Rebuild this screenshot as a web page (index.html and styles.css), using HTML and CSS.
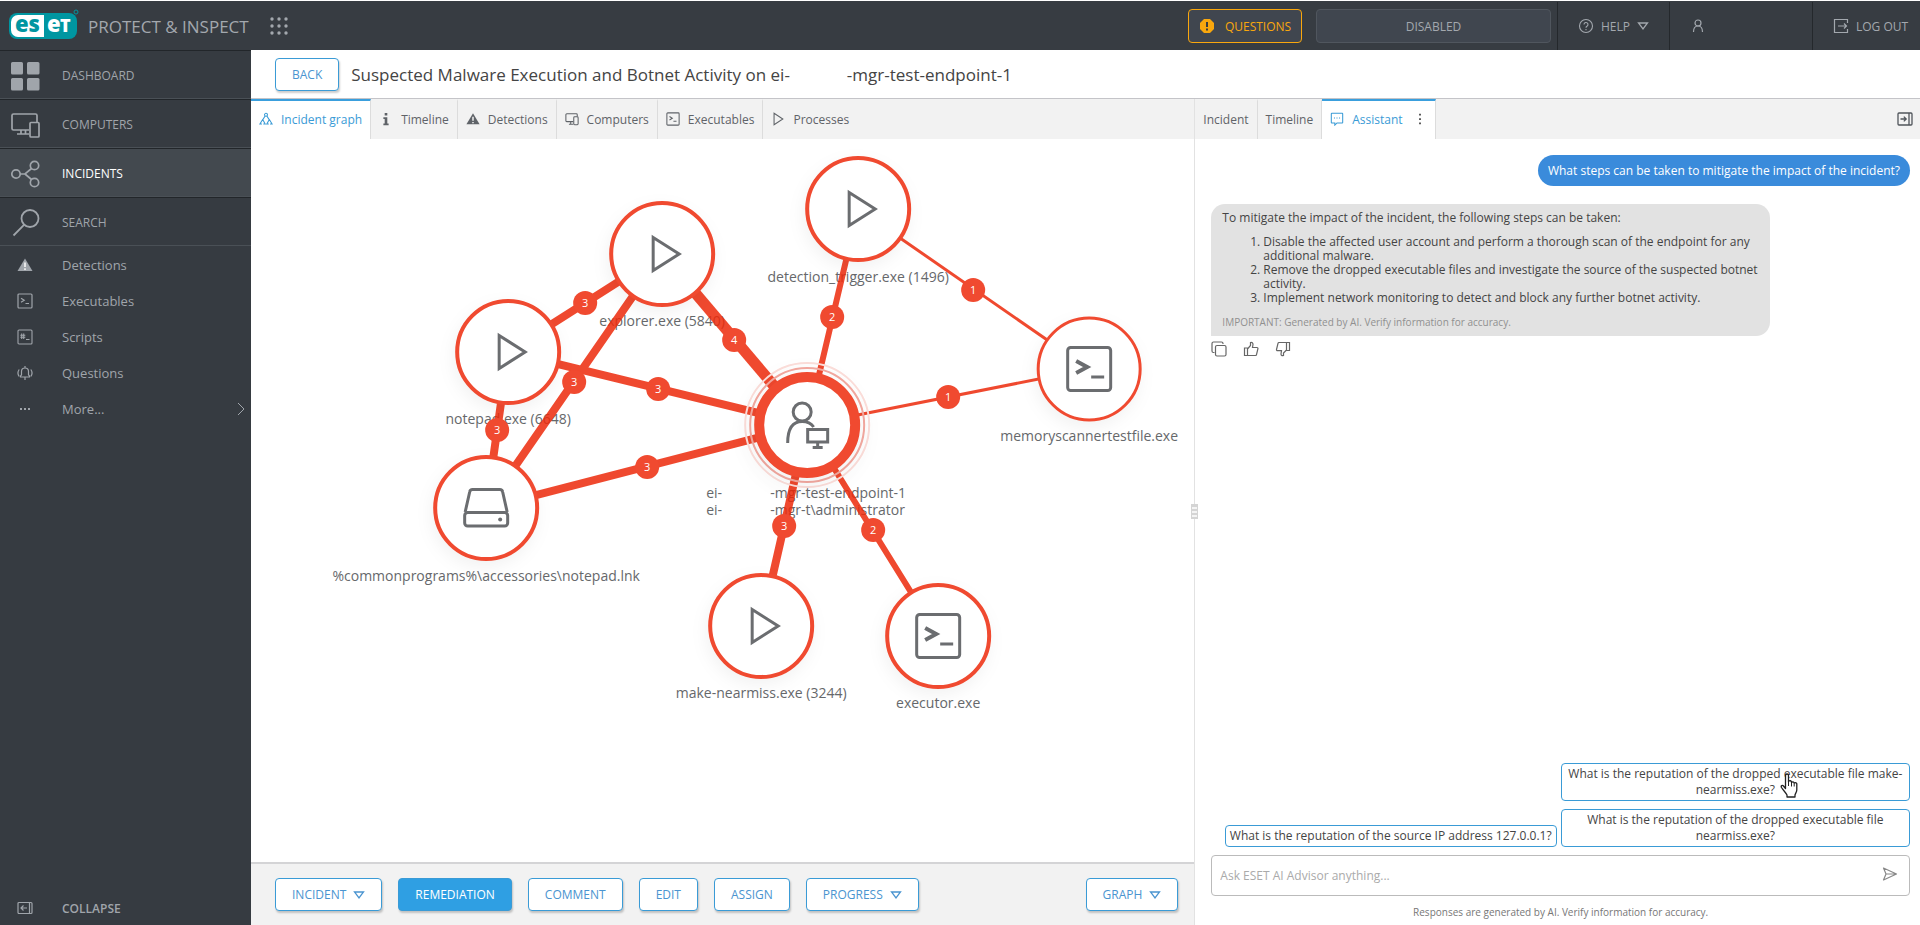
FILE: index.html
```html
<!DOCTYPE html>
<html lang="en">
<head>
  <meta charset="UTF-8" />
  <meta name="viewport" content="width=device-width, initial-scale=1.0"/>
  <title>ESET Protect &amp; Inspect</title>
  <link rel="stylesheet" href="styles.css">
</head>
<body>
  <!-- shared icons -->
  <svg class="sprite" aria-hidden="true">
    <symbol id="i-dashboard" viewBox="0 0 30 30"><path fill="currentColor" d="M2 1h9.500a1.500 1.500 0 0 1 1.500 1.500V12a1.500 1.500 0 0 1-1.500 1.500H2.500A1.500 1.500 0 0 1 1 12V2.500A1.500 1.500 0 0 1 2.500 1zM18.500 1H28a1.500 1.500 0 0 1 1.500 1.500V12a1.500 1.500 0 0 1-1.500 1.500h-9.500A1.500 1.500 0 0 1 17 12V2.500A1.500 1.500 0 0 1 18.500 1zM2.500 17h9a1.500 1.500 0 0 1 1.500 1.500v9.500a1.500 1.500 0 0 1-1.500 1.500h-9A1.500 1.500 0 0 1 1 28v-9.500A1.500 1.500 0 0 1 2.500 17zM18.500 17H28a1.500 1.500 0 0 1 1.500 1.500V28a1.500 1.500 0 0 1-1.500 1.500h-9.500A1.500 1.500 0 0 1 17 28v-9.500a1.500 1.500 0 0 1 1.500-1.500z"/></symbol>
    <symbol id="i-computers" viewBox="0 0 30 30"><g fill="none" stroke="currentColor" stroke-width="1.700"><path d="M19 20H3.500A1.500 1.500 0 0 1 2 18.500v-13A1.500 1.500 0 0 1 3.500 4h22A1.500 1.500 0 0 1 27 5.500V12"/><path d="M11 20v4M15.500 20v4M7 24h12"/><rect x="20" y="12.500" width="9" height="14.500" rx="1"/></g></symbol>
    <symbol id="i-incidents" viewBox="0 0 30 30"><g fill="none" stroke="currentColor" stroke-width="1.700"><circle cx="6" cy="15" r="4.200"/><circle cx="24.500" cy="6.500" r="4.200"/><circle cx="24.500" cy="23.500" r="4.200"/><path d="M10.200 15h4.800l6.500-5.500M15 15l6.500 5.500"/></g></symbol>
    <symbol id="i-search" viewBox="0 0 30 30"><g fill="none" stroke="currentColor" stroke-width="1.800"><circle cx="20" cy="10.500" r="8.500"/><path d="M14 16.800 3.500 27.500"/></g></symbol>
    <symbol id="i-warn" viewBox="0 0 16 16"><path fill="currentColor" d="M8 1.500 15.500 14H.500z"/><path class="cut" d="M8 5.500v4.500M8 11.300v1.600" stroke-width="1.700"/></symbol>
    <symbol id="i-exe" viewBox="0 0 16 16"><g fill="none" stroke="currentColor" stroke-width="1.200"><rect x="1" y="1" width="14" height="14" rx="1"/><path d="m4 5.200 3.200 2L4 9.200M8.500 10.500h3.500"/></g></symbol>
    <symbol id="i-script" viewBox="0 0 16 16"><g fill="none" stroke="currentColor" stroke-width="1.100"><rect x="1" y="1" width="14" height="14" rx="1"/><path d="M4.700 4.500v5.500M6.700 4.500v5.500M3.300 6.200h5M3.300 8.300h5M9 10.500h3.500"/></g></symbol>
    <symbol id="i-bell" viewBox="0 0 16 16"><g fill="none" stroke="currentColor" stroke-width="1.200"><path d="M3.500 12V11l1-1.200V6.500a3.500 3.500 0 0 1 7 0v3.300l1 1.200v1zM8 1v2M8 12.500V15M2.200 4.500a6 6 0 0 0 0 7M13.800 4.500a6 6 0 0 1 0 7"/></g></symbol>
    <symbol id="i-dots" viewBox="0 0 16 16"><path fill="currentColor" d="M3 7h2v2H3zM7 7h2v2H7zM11 7h2v2h-2z"/></symbol>
    <symbol id="i-collapse" viewBox="0 0 16 16"><g fill="none" stroke="currentColor" stroke-width="1.200"><rect x="1" y="2.500" width="14" height="11" rx="1"/><path d="M12.500 2.500v11M10 8H4M6.500 5.500 4 8l2.500 2.500"/></g></symbol>
    <symbol id="i-expand" viewBox="0 0 16 16"><g fill="none" stroke="currentColor" stroke-width="1.300"><rect x="1" y="2" width="14" height="12" rx="1"/><path d="M12 2v12M3.500 8H9M6.800 5.600 9.200 8l-2.400 2.400"/></g></symbol>
    <symbol id="i-graph" viewBox="0 0 16 16"><g fill="none" stroke="currentColor" stroke-width="1.200"><circle cx="8" cy="3.200" r="1.700"/><path d="M7 4.600 4.200 9M9 4.600 11.800 9M4.200 8.500 1 13.800h2.400M4.200 8.500l2.900 5.300H4.900M11.800 8.500l-2.900 5.300h2.300M11.800 8.500l3.200 5.300h-2.400"/></g></symbol>
    <symbol id="i-info" viewBox="0 0 16 16"><path fill="currentColor" d="M6.500 1h3v3h-3zM5 6h4.500v7H11v2H5v-2h1.500V8H5z"/></symbol>
    <symbol id="i-pc" viewBox="0 0 16 16"><g fill="none" stroke="currentColor" stroke-width="1.200"><path d="M9.500 11H2a1 1 0 0 1-1-1V3a1 1 0 0 1 1-1h11a1 1 0 0 1 1 1v2M4.500 14h5M6.500 11v3"/><rect x="10" y="5.500" width="5" height="9" rx="1"/></g></symbol>
    <symbol id="i-play" viewBox="0 0 16 16"><path fill="none" stroke="currentColor" stroke-width="1.200" d="M3.500 1.500 13.500 8l-10 6.500z"/></symbol>
    <symbol id="i-down" viewBox="0 0 12 10"><path fill="none" stroke="currentColor" stroke-width="1.300" d="M1.500 2h9L6 8z"/></symbol>
    <symbol id="i-help" viewBox="0 0 16 16"><g fill="none" stroke="currentColor" stroke-width="1.100"><circle cx="8" cy="8" r="6.500"/><path d="M6 6.500a2 2 0 1 1 3 1.700c-.700.400-1 .7-1 1.500M8 11v1.300"/></g></symbol>
    <symbol id="i-user" viewBox="0 0 16 16"><g fill="none" stroke="currentColor" stroke-width="1.200"><circle cx="8" cy="5" r="3"/><path d="M3.500 14c0-3.500 1.500-6 4.500-6s4.500 2.500 4.500 6"/></g></symbol>
    <symbol id="i-logout" viewBox="0 0 16 16"><path fill="none" stroke="currentColor" stroke-width="1.200" d="M14.500 5V1.500h-13v13h13V11M5 8h8.500M11 5.500 13.500 8 11 10.500"/></symbol>
    <symbol id="i-chat" viewBox="0 0 16 16"><path fill="none" stroke="currentColor" stroke-width="1.200" d="M2 1.500h12a.5.5 0 0 1 .5.500v10a.5.5 0 0 1-.5.500H8L5.500 15v-2.500H2a.5.5 0 0 1-.5-.5V2a.5.5 0 0 1 .5-.5z"/><path fill="currentColor" d="M4.500 6.300h1.200v1.200H4.500zM7.400 6.300h1.200v1.200H7.400zM10.300 6.300h1.200v1.200h-1.200z"/></symbol>
    <symbol id="i-kebab" viewBox="0 0 16 16"><path fill="currentColor" d="M7 2h2v2H7zM7 7h2v2H7zM7 12h2v2H7z"/></symbol>
    <symbol id="i-copy" viewBox="0 0 16 16"><g fill="none" stroke="currentColor" stroke-width="1.200"><rect x="4.500" y="4.500" width="10.500" height="10.500" rx="1.500"/><path d="M3.500 11.500H2.500A1.500 1.500 0 0 1 1 10V2.500A1.500 1.500 0 0 1 2.500 1h8A1.500 1.500 0 0 1 12 2.500v.5"/></g></symbol>
    <symbol id="i-up" viewBox="0 0 16 16"><path fill="none" stroke="currentColor" stroke-width="1.200" d="M1.500 7h3v7.500h-3zM4.500 8 7.500 4.500V1.500C9 1 10 2 10 3.500L9.500 6.500H14a1 1 0 0 1 1 1L13.500 13.500a1 1 0 0 1-1 1h-8"/></symbol>
    <symbol id="i-down-thumb" viewBox="0 0 16 16"><path fill="none" stroke="currentColor" stroke-width="1.200" d="M11.500 1.500h3v8h-3zM11.500 1.500H4a1 1 0 0 0-1 .8L1.500 8.500a1 1 0 0 0 1 1.200h4L6 13c0 1.500 1 2 2.500 1.500v-2.500l3-3"/></symbol>
    <symbol id="i-send" viewBox="0 0 16 16"><path fill="none" stroke="currentColor" stroke-width="1.200" stroke-linejoin="round" d="M1.500 2 14.500 8l-13 6 2.500-6zM4 8h10"/></symbol>
    <symbol id="n-play" viewBox="0 0 60 60"><path fill="none" stroke="currentColor" stroke-width="3" d="M21 13.500 47 30 21 46.500z"/></symbol>
    <symbol id="n-exe" viewBox="0 0 60 60"><rect x="8.500" y="8.500" width="43" height="43" rx="3" fill="none" stroke="currentColor" stroke-width="3"/><path fill="none" stroke="currentColor" stroke-width="4" d="m17 22 11 6-11 6"/><path stroke="currentColor" stroke-width="3" d="M32 38h13"/></symbol>
    <symbol id="n-drive" viewBox="0 0 60 60"><g fill="none" stroke="currentColor" stroke-width="3"><path d="m9 34 4.500-20a3 3 0 0 1 3-2.500h27a3 3 0 0 1 3 2.500L51 34"/><rect x="8.500" y="34.500" width="43" height="13.500" rx="3"/></g><circle cx="44" cy="41.500" r="2" fill="currentColor"/></symbol>
    <symbol id="n-user" viewBox="0 0 60 60"><g fill="none" stroke="currentColor" stroke-width="3"><circle cx="25" cy="17" r="9"/><path d="M10.500 48c0-15 5-21.500 14.500-21.500 5 0 9 1.800 11.500 5.500"/><rect x="30.500" y="34.500" width="20" height="12.500"/><path d="M40.500 47v5M35.500 52.500h10"/></g></symbol>
  </svg>

  <header class="topbar">
    <svg class="logo" viewBox="0 0 72 32" role="img" aria-label="eset">
      <rect x="1" y="5" width="68" height="26" rx="8" fill="#0096a1"/>
      <path d="M10 7h26v22H10a7 7 0 0 1-7-7v-8a7 7 0 0 1 7-7z" fill="#fff"/>
      <circle cx="68" cy="4" r="2" fill="none" stroke="#0096a1"/>
      <text x="7" y="24" class="logo-text"><tspan fill="#0096a1">es</tspan><tspan x="39" fill="#fff">e</tspan><tspan x="52" fill="#fff" class="logo-cap">T</tspan></text>
    </svg>
    <span class="product">PROTECT &amp; INSPECT</span>
    <button class="apps" aria-label="Apps">
      <svg viewBox="0 0 20 20" fill="currentColor"><circle cx="3" cy="3" r="1.700"/><circle cx="10" cy="3" r="1.700"/><circle cx="17" cy="3" r="1.700"/><circle cx="3" cy="10" r="1.700"/><circle cx="10" cy="10" r="1.700"/><circle cx="17" cy="10" r="1.700"/><circle cx="3" cy="17" r="1.700"/><circle cx="10" cy="17" r="1.700"/><circle cx="17" cy="17" r="1.700"/></svg>
    </button>
    <button class="questions">
      <svg class="icon" viewBox="0 0 16 16"><path fill="#f9a70d" d="M5 1h6l4 4v6l-4 4H5l-4-4V5z"/><path stroke="#373c43" stroke-width="2" d="M8 4v5M8 10.500v2"/></svg>
      QUESTIONS
    </button>
    <button class="disabled-box">DISABLED</button>
    <button class="top-item help"><svg class="icon"><use href="#i-help"/></svg>HELP<svg class="caret"><use href="#i-down"/></svg></button>
    <button class="top-item user" aria-label="User"><svg class="icon"><use href="#i-user"/></svg></button>
    <button class="top-item logout"><svg class="icon"><use href="#i-logout"/></svg>LOG OUT</button>
  </header>

  <div class="layout">
    <nav class="sidebar">
      <a class="nav-main" href="#"><svg><use href="#i-dashboard"/></svg>DASHBOARD</a>
      <a class="nav-main" href="#"><svg><use href="#i-computers"/></svg>COMPUTERS</a>
      <a class="nav-main active" href="#"><svg><use href="#i-incidents"/></svg>INCIDENTS</a>
      <a class="nav-main" href="#"><svg><use href="#i-search"/></svg>SEARCH</a>
      <a class="nav-sub" href="#"><svg><use href="#i-warn"/></svg>Detections</a>
      <a class="nav-sub" href="#"><svg><use href="#i-exe"/></svg>Executables</a>
      <a class="nav-sub" href="#"><svg><use href="#i-script"/></svg>Scripts</a>
      <a class="nav-sub" href="#"><svg><use href="#i-bell"/></svg>Questions</a>
      <a class="nav-sub" href="#"><svg><use href="#i-dots"/></svg>More...<svg class="chevron" viewBox="0 0 8 14"><path fill="none" stroke="currentColor" d="m1 1 6 6-6 6"/></svg></a>
      <a class="nav-sub collapse" href="#"><svg><use href="#i-collapse"/></svg>COLLAPSE</a>
    </nav>

    <main class="content">
      <div class="titlebar">
        <button class="btn">BACK</button>
        <h1>Suspected Malware Execution and Botnet Activity on ei-<span class="blank"></span>-mgr-test-endpoint-1</h1>
      </div>

      <div class="panels">
        <section class="graph-panel">
          <div class="tabs">
            <button class="tab active"><svg class="icon"><use href="#i-graph"/></svg>Incident graph</button>
            <button class="tab"><svg class="icon"><use href="#i-info"/></svg>Timeline</button>
            <button class="tab"><svg class="icon"><use href="#i-warn"/></svg>Detections</button>
            <button class="tab"><svg class="icon"><use href="#i-pc"/></svg>Computers</button>
            <button class="tab"><svg class="icon"><use href="#i-exe"/></svg>Executables</button>
            <button class="tab"><svg class="icon"><use href="#i-play"/></svg>Processes</button>
          </div>

          <svg class="graph" viewBox="0 0 943 723">
            <g class="labels">
              <text x="607" y="143">detection_trigger.exe (1496)</text>
              <text x="411" y="187">explorer.exe (5840)</text>
              <text x="257" y="285">notepad.exe (6648)</text>
              <text x="235" y="442">%commonprograms%\accessories\notepad.lnk</text>
              <text x="838" y="302">memoryscannertestfile.exe</text>
              <text x="510" y="559">make-nearmiss.exe (3244)</text>
              <text x="687" y="569">executor.exe</text>
              <g class="start">
                <text x="455" y="359">ei-</text>
                <text x="519" y="359">-mgr-test-endpoint-1</text>
                <text x="455" y="376">ei-</text>
                <text x="519" y="376">-mgr-t\administrator</text>
              </g>
            </g>
            <g class="edges">
              <path stroke-width="11" d="M411 115 556 286"/>
              <path stroke-width="8" d="M411 115 257 213M411 115 235 369M257 213 235 369M257 213 556 286M235 369 556 286M556 286 510 487"/>
              <path stroke-width="6" d="M607 70 556 286M556 286 687 497"/>
              <path stroke-width="3" d="M607 70 838 230M556 286 838 230"/>
            </g>
            <g class="nodes">
              <circle cx="607" cy="70" r="51"/>
              <circle cx="411" cy="115" r="51"/>
              <circle cx="257" cy="213" r="51"/>
              <circle cx="235" cy="369" r="51"/>
              <circle cx="838" cy="230" r="51" class="thin"/>
              <circle cx="510" cy="487" r="51"/>
              <circle cx="687" cy="497" r="51"/>
              <circle cx="556" cy="286" r="57" class="halo"/>
              <circle cx="556" cy="286" r="62" class="halo faint"/>
              <circle cx="556" cy="286" r="48" class="center"/>
            </g>
            <g class="node-icons">
              <use href="#n-play" x="577" y="40" width="60" height="60"/>
              <use href="#n-play" x="381" y="85" width="60" height="60"/>
              <use href="#n-play" x="227" y="183" width="60" height="60"/>
              <use href="#n-drive" x="205" y="339" width="60" height="60"/>
              <use href="#n-exe" x="808" y="200" width="60" height="60"/>
              <use href="#n-play" x="480" y="457" width="60" height="60"/>
              <use href="#n-exe" x="657" y="467" width="60" height="60"/>
              <use href="#n-user" x="526" y="256" width="60" height="60"/>
            </g>
            <g class="badges">
              <circle cx="334" cy="164" r="12"/><text x="334" y="168">3</text>
              <circle cx="323" cy="243" r="12"/><text x="323" y="247">3</text>
              <circle cx="407" cy="250" r="12"/><text x="407" y="254">3</text>
              <circle cx="483" cy="201" r="12"/><text x="483" y="205">4</text>
              <circle cx="246" cy="291" r="12"/><text x="246" y="295">3</text>
              <circle cx="396" cy="328" r="12"/><text x="396" y="332">3</text>
              <circle cx="533" cy="387" r="12"/><text x="533" y="391">3</text>
              <circle cx="622" cy="391" r="12"/><text x="622" y="395">2</text>
              <circle cx="581" cy="178" r="12"/><text x="581" y="182">2</text>
              <circle cx="722" cy="151" r="12"/><text x="722" y="155">1</text>
              <circle cx="697" cy="258" r="12"/><text x="697" y="262">1</text>
            </g>
          </svg>

          <div class="actions">
            <button class="btn">INCIDENT<svg class="caret"><use href="#i-down"/></svg></button>
            <button class="btn primary">REMEDIATION</button>
            <button class="btn">COMMENT</button>
            <button class="btn">EDIT</button>
            <button class="btn">ASSIGN</button>
            <button class="btn">PROGRESS<svg class="caret"><use href="#i-down"/></svg></button>
            <button class="btn last">GRAPH<svg class="caret"><use href="#i-down"/></svg></button>
          </div>
        </section>

        <aside class="assistant">
          <div class="splitter"></div>
          <div class="tabs">
            <button class="tab">Incident</button>
            <button class="tab">Timeline</button>
            <button class="tab active"><svg class="icon"><use href="#i-chat"/></svg>Assistant<svg class="icon kebab"><use href="#i-kebab"/></svg></button>
            <button class="hide-panel" aria-label="Hide panel"><svg class="icon"><use href="#i-expand"/></svg></button>
          </div>

          <div class="chat">
            <p class="question">What steps can be taken to mitigate the impact of the incident?</p>
            <div class="answer">
              <p>To mitigate the impact of the incident, the following steps can be taken:</p>
              <ol>
                <li>Disable the affected user account and perform a thorough scan of the endpoint for any additional malware.</li>
                <li>Remove the dropped executable files and investigate the source of the suspected botnet activity.</li>
                <li>Implement network monitoring to detect and block any further botnet activity.</li>
              </ol>
              <p class="important">IMPORTANT: Generated by AI. Verify information for accuracy.</p>
            </div>
            <div class="feedback">
              <button aria-label="Copy"><svg class="icon"><use href="#i-copy"/></svg></button>
              <button aria-label="Like"><svg class="icon"><use href="#i-up"/></svg></button>
              <button aria-label="Dislike"><svg class="icon"><use href="#i-down-thumb"/></svg></button>
            </div>

            <div class="suggestions">
              <div class="suggestion-row">
                <button class="suggestion wide">What is the reputation of the dropped executable file make-<wbr>nearmiss.exe?
                  <svg class="cursor" viewBox="0 0 18 25"><path fill="#fff" stroke="#222" stroke-width="1.300" stroke-linejoin="round" d="M5.500 15.500V2.500a1.500 1.500 0 0 1 3 0V9a1.500 1.500 0 0 1 3 .5 1.500 1.500 0 0 1 2.700.700 1.500 1.500 0 0 1 2.600 1.300V17c0 2-1.500 3.500-1.800 5v2H7v-2c-1-2-3.500-4.500-5.500-7.500-1-2 1-2.500 2-1.500z"/><path stroke="#222" d="M8.500 9v4M11.500 9.500v4M14.200 10.500v3"/></svg>
                </button>
              </div>
              <div class="suggestion-row">
                <button class="suggestion">What is the reputation of the source IP address 127.0.0.1?</button>
                <button class="suggestion wide">What is the reputation of the dropped executable file nearmiss.exe?</button>
              </div>
            </div>
            <div class="ask">
              <input type="text" aria-label="Message" placeholder="Ask ESET AI Advisor anything..." />
              <button aria-label="Send"><svg class="icon"><use href="#i-send"/></svg></button>
            </div>
            <p class="note">Responses are generated by AI. Verify information for accuracy.</p>
          </div>
        </aside>
      </div>
    </main>
  </div>
</body>
</html>
```
FILE: styles.css
```css
* {
  box-sizing: border-box;
}

body {
  margin: 0;
  height: 100vh;
  display: flex;
  flex-direction: column;
  font-family: "Open Sans", "Noto Sans", sans-serif;
  font-size: 12px;
  color: #444;
  background: #fff;
}

button {
  font: inherit;
  color: inherit;
  background: none;
  border: none;
  padding: 0;
  cursor: pointer;
}

h1, p, ol {
  margin: 0;
}

.sprite {
  position: absolute;
  width: 0;
  height: 0;
}

.icon {
  width: 16px;
  height: 16px;
  flex: none;
}

.caret {
  width: 12px;
  height: 10px;
  flex: none;
}

.cut {
  stroke: #f2f2f2;
}

/* top bar */
.topbar {
  display: flex;
  align-items: center;
  height: 50px;
  flex: none;
  padding-left: 8px;
  padding-top: 1px;
  background: #373c42;
  border-top: 1px solid #fff;
  color: #a3a8ae;
}

.logo {
  width: 72px;
  height: 32px;
  margin-bottom: 4px;
}

.logo-text {
  font-size: 22px;
  font-weight: 800;
}

.logo-cap {
  font-size: 18px;
}

.product {
  margin-left: 8px;
  font-size: 17px;
}

.apps {
  width: 20px;
  height: 20px;
  margin-left: 20px;
}

.questions {
  display: flex;
  align-items: center;
  justify-content: center;
  gap: 10px;
  width: 114px;
  height: 34px;
  margin-left: auto;
  border: 1px solid #f9a70d;
  border-radius: 4px;
  background: #40464f;
  color: #f9a70d;
}

.disabled-box {
  width: 235px;
  height: 34px;
  margin: 0 6px 0 14px;
  border: 1px solid #50565e;
  border-radius: 4px;
  background: #40464f;
}

.top-item {
  display: flex;
  align-items: center;
  align-self: stretch;
  gap: 7px;
  padding: 0 20px;
  border-left: 1px solid #24282c;
  white-space: nowrap;
}

.help {
  width: 112px;
}

.user {
  width: 143px;
}

.logout {
  width: 108px;
}

/* sidebar */
.layout {
  display: flex;
  flex: 1;
  min-height: 0;
}

.sidebar {
  display: flex;
  flex-direction: column;
  width: 251px;
  flex: none;
  background: #363b41;
}

.sidebar .cut {
  stroke: #363b41;
}

.sidebar a {
  display: flex;
  align-items: center;
  color: #a0a5ab;
  text-decoration: none;
}

.nav-main {
  height: 49px;
  padding: 2px 0 0 10px;
  gap: 22px;
  border-top: 1px solid #22262a;
  border-bottom: 1px solid #4a5056;
}

.nav-main svg {
  width: 30px;
  height: 30px;
}

.sidebar .nav-main.active {
  background: #43494f;
  color: #fff;
}

.nav-main.active svg {
  color: #a0a5ab;
}

.nav-sub {
  height: 36px;
  padding: 2px 6px 0 17px;
  gap: 29px;
  font-size: 13px;
}

.nav-sub svg {
  width: 16px;
  height: 16px;
}

.nav-sub .chevron {
  width: 8px;
  height: 14px;
  margin-left: auto;
}

.collapse {
  margin-top: auto;
  font-size: 12px;
  font-weight: 600;
}

/* title */
.content {
  display: flex;
  flex-direction: column;
  flex: 1;
  min-width: 0;
}

.titlebar {
  display: flex;
  align-items: center;
  gap: 12px;
  height: 49px;
  flex: none;
  padding-left: 24px;
  border-bottom: 1px solid #c4c4c8;
}

.titlebar h1 {
  font-size: 17px;
  font-weight: 400;
  white-space: nowrap;
}

.blank {
  display: inline-block;
  width: 57px;
}

.btn {
  display: flex;
  align-items: center;
  justify-content: center;
  gap: 7px;
  height: 33px;
  padding: 0 16px;
  border: 1px solid #3a9bd6;
  border-radius: 4px;
  background: #fff;
  color: #4a94d0;
  box-shadow: 1px 2px 2px rgba(0, 0, 0, 0.2);
}

.btn.primary {
  background: #2f9fe3;
  color: #fff;
}

.btn.last {
  margin-left: auto;
}

.panels {
  display: grid;
  grid-template-columns: 13fr 10fr;
  flex: 1;
  min-height: 0;
}

/* tabs */
.tabs {
  display: flex;
  height: 40px;
  flex: none;
  background: #f2f2f2;
}

.tab {
  display: flex;
  align-items: center;
  gap: 8px;
  padding: 0 8px 2px;
  border-top: 2px solid transparent;
  border-right: 1px solid #dcdcdc;
  color: #5f6368;
  white-space: nowrap;
}

.tab .icon {
  width: 14px;
  height: 14px;
}

.tab:last-of-type {
  border-right: none;
}

.tab.active {
  background: #fff;
  border-top-color: #3a9fdd;
  color: #3a9bd6;
}

/* graph */
.graph-panel {
  display: flex;
  flex-direction: column;
  min-width: 0;
  min-height: 0;
}

.graph {
  flex: 1;
  width: 100%;
  min-height: 0;
}

.labels {
  font-size: 14px;
  fill: #66686b;
  text-anchor: middle;
}

.labels .start {
  text-anchor: start;
}

.edges {
  fill: none;
  stroke: #ed2a0b;
  opacity: 0.85;
}

.nodes circle {
  fill: #fff;
  stroke: #f04a30;
  stroke-width: 4;
  filter: drop-shadow(-2px 6px 8px rgba(0, 0, 0, 0.05));
}

.nodes .thin {
  stroke-width: 3;
}

.nodes .halo {
  fill: none;
  stroke: #f3a9a0;
  stroke-width: 2;
}

.nodes .faint {
  stroke: #fadcd8;
}

.nodes .center {
  stroke-width: 10;
}

.node-icons {
  color: #6b6d70;
}

.badges {
  fill: #f04a30;
  font-size: 11px;
  text-anchor: middle;
}

.badges text {
  fill: #fff;
}

.actions {
  display: flex;
  align-items: center;
  gap: 16px;
  height: 63px;
  flex: none;
  padding: 0 16px 0 24px;
  background: #f2f2f2;
  border-top: 2px solid #d4d4d6;
}

/* assistant */
.assistant {
  position: relative;
  display: flex;
  flex-direction: column;
  min-width: 0;
  border-left: 1px solid #e2e2e2;
}

.splitter {
  position: absolute;
  left: -4px;
  top: 49%;
  width: 7px;
  height: 15px;
  background: repeating-linear-gradient(#d4d4d4 0 2px, #f4f4f4 2px 4px);
  border: 1px solid #d4d4d4;
}

.kebab {
  margin-left: 2px;
  color: #444;
}

.hide-panel {
  margin-left: auto;
  padding: 0 7px;
  color: #50555b;
}

.hide-panel svg {
  display: block;
}

.chat {
  display: flex;
  flex-direction: column;
  flex: 1;
  padding: 16px 10px 4px 16px;
}

.question {
  align-self: flex-end;
  padding: 7px 10px;
  border-radius: 16px;
  background: #3a8bdb;
  color: #fff;
  font-weight: 500;
  line-height: 17px;
}

.answer {
  width: 80%;
  margin-top: 18px;
  padding: 7px 11px;
  border-radius: 14px 14px 14px 0;
  background: #e2e2e2;
  line-height: 14px;
}

.answer ol {
  margin: 10px 0;
  padding-left: 41px;
}

.important {
  color: #909090;
  font-size: 10px;
}

.feedback {
  display: flex;
  gap: 16px;
  margin-top: 5px;
  color: #666;
}

.suggestions {
  display: flex;
  flex-direction: column;
  gap: 8px;
  margin-top: auto;
}

.suggestion-row {
  display: flex;
  align-items: flex-end;
  justify-content: flex-end;
  gap: 4px;
}

.suggestion {
  position: relative;
  padding: 2px 4px;
  border: 1px solid #3a9bd6;
  border-radius: 4px;
  line-height: 16px;
}

.suggestion.wide {
  width: 50%;
}

/* pointer over the first suggestion */
.cursor {
  position: absolute;
  left: 63%;
  top: 9px;
  width: 18px;
  height: 25px;
}

.ask {
  display: flex;
  align-items: center;
  height: 41px;
  margin-top: 8px;
  padding: 0 11px 0 8px;
  border: 1px solid #bbb;
  border-radius: 4px;
  color: #888;
}

.ask input {
  flex: 1;
  border: none;
  outline: none;
  padding: 0;
  font: inherit;
}

.ask input::placeholder {
  color: #aaa;
}

.note {
  margin-top: 8px;
  padding-bottom: 1px;
  text-align: center;
  font-size: 10px;
  line-height: 16px;
  color: #777;
}
```
